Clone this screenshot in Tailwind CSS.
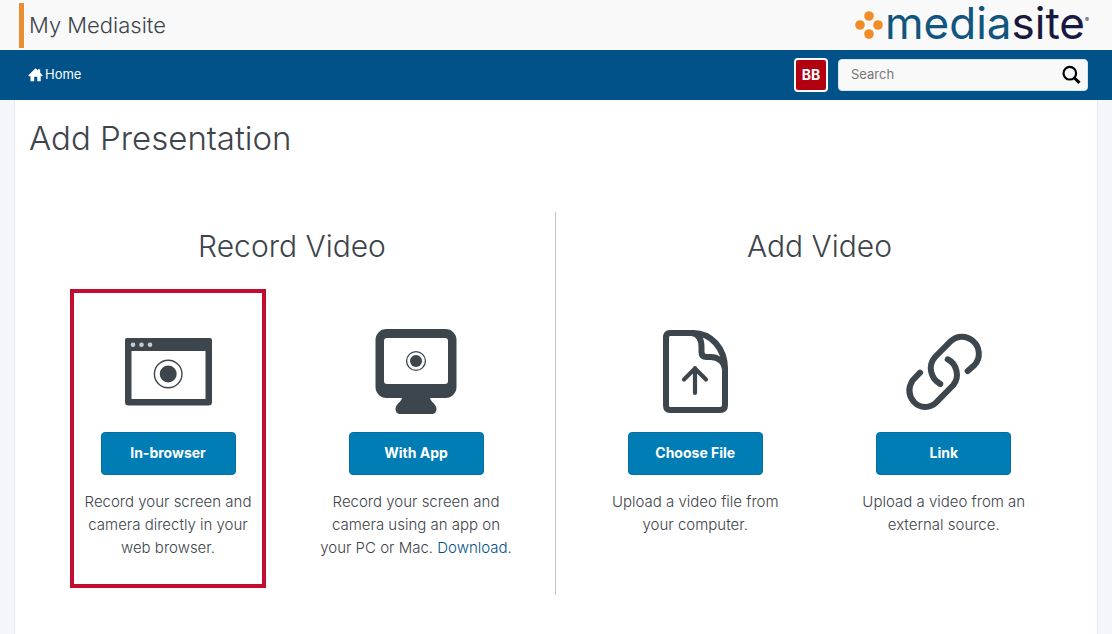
<!DOCTYPE html>
<html lang="en">
<head>
<meta charset="utf-8">
<title>My Mediasite</title>
<script src="https://cdn.jsdelivr.net/npm/@tailwindcss/browser@4"></script>
</head>
<body class="flex min-h-screen flex-col bg-[#f3f7fb] font-['Inter',sans-serif] text-[#3d444b]">
<header class="flex h-[50px] items-center justify-between bg-[#f9f9f9] pr-6 pl-[19px]">
  <div class="flex h-[45px] items-center border-l-5 border-[#e78f31] pl-[5px] text-[22px] font-light">My Mediasite</div>
  <a href="#" class="flex items-center gap-[2px]" aria-label="mediasite">
    <svg class="h-7 w-7" viewBox="0 0 28 28" fill="#f08d28"><circle cx="14" cy="5" r="4.8"/><circle cx="5" cy="14" r="4.8"/><circle cx="23" cy="14" r="4.8"/><circle cx="14" cy="23" r="4.8"/></svg>
    <span class="flex items-center pb-1 text-[44px] leading-[46px] text-[#10567f]"><span>media</span><span class="text-[#19183f]">site</span><sup class="w-[3px] text-[6px] text-[#19183f]">®</sup></span>
  </a>
</header>
<nav class="flex h-[50px] items-center justify-between bg-[#005288] pr-6 pl-7">
  <a href="#" class="flex items-center gap-[2px] text-[13px] text-white">
    <svg class="h-4 w-[15px]" viewBox="0 0 15 16" fill="currentColor"><path d="M7.5 1.2 10 3.6V2.2h2.2v3.500l2.600 2.700-.8.8h-1.300v5H9.300V9.800H6.200v4.400H2.500v-5H1l-.8-.8z"/></svg>
    Home</a>
  <div class="flex items-center gap-[10px]">
    <button class="h-[34px] w-[34px] rounded-[4px] border-2 border-white bg-[#b30010] text-sm font-bold text-white">BB</button>
    <form class="flex h-8 w-[250px] items-center justify-between rounded-[4px] border border-[#d5e6f3] bg-[#f9f9f9] pr-[6px] pl-3">
      <input type="search" aria-label="Search" placeholder="Search" class="min-w-0 grow text-[13px] outline-none placeholder:text-[#777]">
      <button type="button" aria-label="Submit search"><svg class="h-5 w-5" viewBox="0 0 20 20" fill="none" stroke="#000"><circle cx="8.800" cy="8.200" r="6.300" stroke-width="2.200"/><path d="m13.500 13 5 4.800" stroke-width="3"/></svg></button>
    </form>
  </div>
</nav>
<main class="mx-[14px] grow border-x border-[#e3eaf1] bg-white px-[14px] pt-[18px]">
  <h1 class="text-[33px] leading-10 font-light">Add Presentation</h1>
  <div class="mt-[54px] grid grid-cols-2">
    <section class="border-r border-[#c3c3c3] px-[15px] pt-[14px] pb-9 text-center">
      <h2 class="text-[30px] leading-10 font-light">Record Video</h2>
      <div class="mt-[62px] grid grid-cols-2 text-[15px] leading-[23px] font-light">
        <article class="relative flex flex-col items-center">
          <div class="pointer-events-none absolute inset-x-[26px] -top-[39px] -bottom-[29px] border-4 border-[#c20d31]"></div>
          <svg class="h-[86px] w-[88px]" viewBox="0 0 88 86"><path fill="#3d464d" fill-rule="evenodd" d="M3 10h83a2 2 0 0 1 2 2v62a3.500 3.500 0 0 1-3.500 3.500H4.500A3.500 3.500 0 0 1 1 74V12a2 2 0 0 1 2-2zM7.500 23v48h74V23z"/><g fill="#c8cccf"><circle cx="9" cy="16.800" r="2.300"/><circle cx="17.500" cy="16.800" r="2.300"/><circle cx="26" cy="16.800" r="2.300"/></g><circle cx="44.200" cy="46" r="13.800" fill="none" stroke="#3d464d" stroke-width="1.400"/><circle cx="44.200" cy="46" r="8.500" fill="#3d464d"/></svg>
          <button class="mt-[18px] h-[43px] w-[135px] rounded-[4px] border border-[#056d9f] bg-[#007db5] pb-[2px] text-sm font-bold text-white">In-browser</button>
          <p class="mt-[15px] w-[180px]">Record your screen and camera directly in your web browser.</p>
        </article>
        <article class="flex flex-col items-center">
          <svg class="h-[86px] w-[88px]" viewBox="0 0 88 86"><path fill="#3d464d" fill-rule="evenodd" d="M14.500 1h59a11 11 0 0 1 11 11v47a11 11 0 0 1-11 11H58c1 4 6 6 6.500 10.500 0 3-1.500 5.500-4.500 5.500H28c-3 0-4.500-2.500-4.500-5.500C24 76 29 74 30 70H14.500a11 11 0 0 1-11-11V12a11 11 0 0 1 11-11zM15 10q-3 0-3 3v40q0 3 3 3h58q3 0 3-3V13q0-3-3-3z"/><circle cx="44" cy="33" r="9.400" fill="none" stroke="#3d464d" stroke-width="1.300"/><circle cx="44" cy="33" r="6" fill="#3d464d"/></svg>
          <button class="mt-[18px] h-[43px] w-[135px] rounded-[4px] border border-[#056d9f] bg-[#007db5] pb-[2px] text-sm font-bold text-white">With App</button>
          <p class="mt-[15px] w-[200px]">Record your screen and camera using an app on your PC or Mac. <a href="#" class="text-[#005288]">Download</a>.</p>
        </article>
      </div>
    </section>
    <section class="px-[15px] pt-[14px] text-center">
      <h2 class="text-[30px] leading-10 font-light">Add Video</h2>
      <div class="mt-[62px] grid grid-cols-2 text-[15px] leading-[23px] font-light">
        <article class="flex flex-col items-center">
          <svg class="h-[86px] w-[88px]" viewBox="0 0 88 86" fill="none" stroke="#3d464d" stroke-width="6" stroke-linejoin="round" stroke-linecap="round"><path d="M19 5h23C60 5 74 20 74 41v36q0 5-5 5H19q-4 0-4-5V10q0-5 4-5z"/><path d="M41 5c7 1 9.500 6 9.500 14v5q0 5 5 5h4c8 0 14 5 14.500 13"/><path d="M44 65V40M33 51.500 44 40.500 55 51.500" stroke-width="4.200"/></svg>
          <button class="mt-[18px] h-[43px] w-[135px] rounded-[4px] border border-[#056d9f] bg-[#007db5] pb-[2px] text-sm font-bold text-white">Choose File</button>
          <p class="mt-[15px] w-[180px]">Upload a video file from your computer.</p>
        </article>
        <article class="flex flex-col items-center">
          <svg class="h-[86px] w-[88px]" viewBox="0 0 88 86" fill="none" stroke="#3d464d" stroke-width="6" stroke-linecap="round"><path d="M40.300 56C31 51 27 38 35.300 28.700L51 13C57 7.500 66 7 73 13C80 19 81 30 74.500 37L67.700 43"/><path d="M20 44.700 12.500 52.500C8 60 8 67 14 74C20 80.500 30 80.500 36 74.700L53.300 57C60 49 57 36 47.700 31.300"/></svg>
          <button class="mt-[18px] h-[43px] w-[135px] rounded-[4px] border border-[#056d9f] bg-[#007db5] pb-[2px] text-sm font-bold text-white">Link</button>
          <p class="mt-[15px] w-[180px]">Upload a video from an external source.</p>
        </article>
      </div>
    </section>
  </div>
</main>
</body>
</html>
